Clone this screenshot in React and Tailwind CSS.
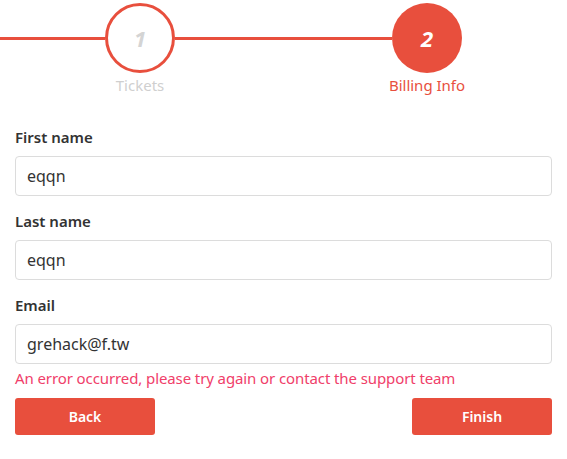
const font = { fontFamily: '"Noto Sans", "Open Sans", sans-serif' }

function Field({ label, value }) {
  return (
    <div className="flex flex-col">
      <label className="text-[15px] leading-[20px] font-semibold text-[#333]">{label}</label>
      <div className="mt-[9px] h-[40px] border border-[#dcdcdc] rounded-[4px] flex items-center px-[11px] text-[16px] text-[#333]">
        {value}
      </div>
    </div>
  )
}

export default function App() {
  return (
    <div className="w-[567px] h-[459px] bg-white" style={font}>
      {/* Stepper */}
      <div className="pt-[3px]">
        <div className="flex items-start">
          <div className="w-[105px] h-[3px] mt-[34px] bg-[#e84f3d]" />
          <div className="w-[70px] h-[70px] rounded-full border-[3px] border-[#e84f3d] bg-white flex items-center justify-center">
            <span className="text-[22px] font-bold italic text-[#d4d4d4]">1</span>
          </div>
          <div className="w-[217px] h-[3px] mt-[34px] bg-[#e84f3d]" />
          <div className="w-[70px] h-[70px] rounded-full bg-[#e84f3d] flex items-center justify-center">
            <span className="text-[22px] font-bold italic text-white">2</span>
          </div>
        </div>
        <div className="flex mt-[2px] text-[15px] leading-[20px]">
          <div className="w-[70px] ml-[105px] flex justify-center">
            <span className="whitespace-nowrap text-[#cfcfcf]">Tickets</span>
          </div>
          <div className="w-[70px] ml-[217px] flex justify-center">
            <span className="whitespace-nowrap text-[#e84f3d]">Billing Info</span>
          </div>
        </div>
      </div>

      {/* Form */}
      <div className="px-[15px] pt-[32px] flex flex-col gap-[15px]">
        <Field label="First name" value="eqqn" />
        <Field label="Last name" value="eqqn" />
        <Field label="Email" value="grehack@f.tw" />
      </div>
      <div className="px-[15px] mt-[4px] text-[15px] leading-[20px] tracking-[-0.1px] text-[#f0406a] whitespace-nowrap">
        An error occurred, please try again or contact the support team
      </div>
      <div className="px-[15px] mt-[10px] flex justify-between">
        <button className="w-[140px] h-[37px] rounded-[3px] bg-[#e84f3d] text-white text-[14px] font-semibold">Back</button>
        <button className="w-[140px] h-[37px] rounded-[3px] bg-[#e84f3d] text-white text-[14px] font-semibold">Finish</button>
      </div>
    </div>
  )
}
